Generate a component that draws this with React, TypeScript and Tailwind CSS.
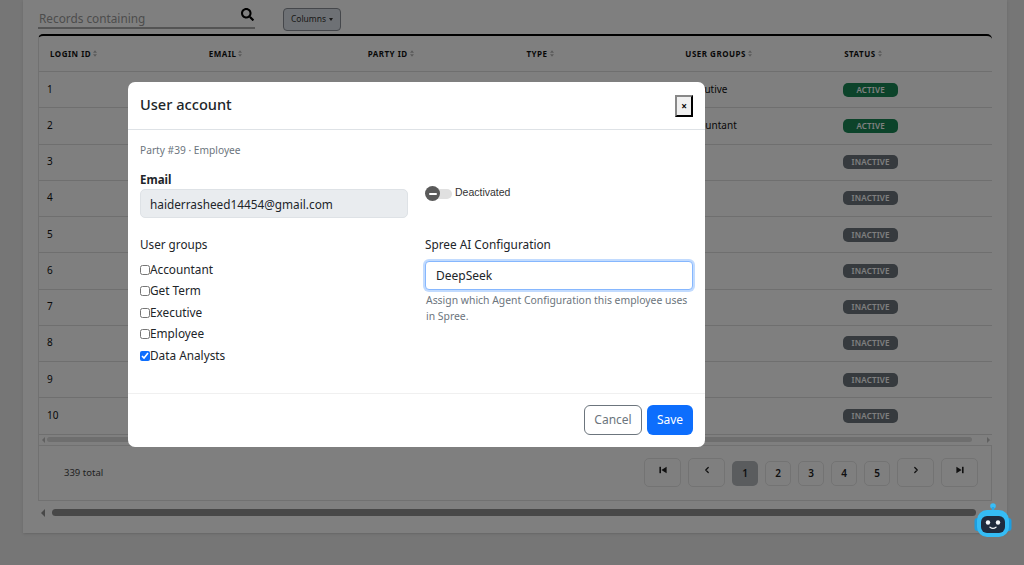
import React from "react";
import { FaSearch } from "react-icons/fa";
import { ChevronLeft, ChevronRight } from "lucide-react";

const headers = ["LOGIN ID", "EMAIL", "PARTY ID", "TYPE", "USER GROUPS", "STATUS"];
const groups = ["Accountant", "Get Term", "Executive", "Employee", "Data Analysts"];
const rows = [1, 2, 3, 4, 5, 6, 7, 8, 9, 10];

function SortIcon() {
  return (
    <svg viewBox="0 0 6 10" className="ml-[2px] h-[7px] w-[4px]" fill="#b5b5b5">
      <path d="M3 0 L6 4 H0 Z M3 10 L0 6 H6 Z" />
    </svg>
  );
}

function SkipIcon({ flip }: { flip?: boolean }) {
  return (
    <svg viewBox="0 0 10 10" className={flip ? "h-[8px] w-[8px] rotate-180" : "h-[8px] w-[8px]"} fill="#222">
      <rect x="0.5" y="1" width="2" height="8" />
      <path d="M9.5 1 V9 L3 5 Z" />
    </svg>
  );
}

function Robot() {
  return (
    <svg viewBox="0 0 38 35" className="h-[35px] w-[38px]">
      <circle cx="19" cy="3" r="2.8" fill="#38bdf8" />
      <rect x="17.8" y="4" width="2.4" height="4" fill="#2aa8e8" />
      <rect x="0.5" y="15" width="6" height="13" rx="3" fill="#1d9ee0" />
      <rect x="31.5" y="15" width="6" height="13" rx="3" fill="#1d9ee0" />
      <rect x="3" y="7" width="32" height="27" rx="10" fill="#35bcf5" />
      <rect x="7" y="13" width="24" height="17" rx="6" fill="#1f2b3e" />
      <circle cx="14" cy="19.5" r="2.2" fill="#f4f7fb" />
      <circle cx="24" cy="19.5" r="2.2" fill="#f4f7fb" />
      <path d="M16 24.2 Q19 26.6 22 24.2" stroke="#f4f7fb" strokeWidth="1.3" fill="none" strokeLinecap="round" />
    </svg>
  );
}

function PageButton({ children, active, wide }: { children: React.ReactNode; active?: boolean; wide?: boolean }) {
  const cls = wide
    ? "flex h-[29px] w-[37px] -translate-y-[1px] items-center justify-center rounded-[5px] border border-[#e6e6e6] bg-white pb-[4px] text-[#222]"
    : active
      ? "flex h-[25px] w-[26px] items-center justify-center rounded-[5px] bg-[#b4b8bd] text-[10px] font-semibold text-[#222]"
      : "flex h-[25px] w-[26px] items-center justify-center rounded-[5px] border border-[#e6e6e6] bg-white text-[10px] font-semibold text-[#222]";
  return <div className={cls}>{children}</div>;
}

export default function App() {
  return (
    <div className="relative h-[565px] w-[1024px] overflow-hidden bg-[#ececec] font-['Noto_Sans',sans-serif]">
      <div className="ml-[23px] h-[533px] w-[984px] bg-white px-[15px] pt-[8px] shadow-sm">
        <div className="flex h-[26px] items-start">
          <div className="flex h-[21px] w-[217px] items-start justify-between border-b-2 border-[#a8a8a8] pl-[1px] pr-[1px]">
            <span className="pt-[2px] text-[11.8px] leading-[17px] text-[#9a9a9a]">Records containing</span>
            <FaSearch className="text-[13px] text-black" />
          </div>
          <div className="ml-[28px] flex h-[23px] w-[58px] items-center justify-center gap-[3px] rounded-[4px] border border-[#8a8f96] bg-[#dde3ea] text-[8.5px] text-[#333]">
            Columns
            <span className="h-0 w-0 border-x-[2.5px] border-t-[3px] border-x-transparent border-t-[#333]" />
          </div>
        </div>

        <div className="w-[954px] rounded-t-[5px] border-t-2 border-black">
          <div className="border-l border-[#e2e2e2]">
            <div className="grid h-[36px] grid-cols-6 items-center border-b border-[#dedede] text-[8px] font-bold tracking-[0.5px] text-[#111]">
              {headers.map((h) => (
                <div key={h} className="flex items-center pl-[11px]">
                  {h}
                  <SortIcon />
                </div>
              ))}
            </div>
            {rows.map((r) => (
              <div key={r} className="grid h-[36.25px] grid-cols-6 items-center border-b border-[#dedede] text-[10px] text-[#111]">
                <div className="pb-[1px] pl-[8px]">{r}</div>
                <div />
                <div />
                <div />
                <div className="pb-[1px] pl-[9px]">{r === 1 ? "Executive" : r === 2 ? "Accountant" : ""}</div>
                <div className="pl-[10px]">
                  <span
                    className={
                      r < 3
                        ? "flex h-[14px] w-[55px] items-center justify-center rounded-[5px] bg-[#198754] text-[8px] font-semibold tracking-[0.2px] text-white"
                        : "flex h-[14px] w-[55px] items-center justify-center rounded-[5px] bg-[#6c757d] text-[8px] font-semibold tracking-[0.2px] text-white"
                    }
                  >
                    {r < 3 ? "ACTIVE" : "INACTIVE"}
                  </span>
                </div>
              </div>
            ))}
          </div>

          <div className="flex h-[10px] items-center gap-[2px] border-l border-[#e2e2e2] pl-[3px]">
            <span className="h-0 w-0 border-y-[3px] border-r-[3px] border-y-transparent border-r-[#c0c0c0]" />
            <div className="h-[5px] w-[925px] rounded-full bg-[#dcdcdc]" />
            <span className="ml-[13px] h-0 w-0 border-y-[3px] border-l-[3px] border-y-transparent border-l-[#c0c0c0]" />
          </div>

          <div className="flex h-[56px] items-center justify-between border border-[#e2e2e2] pl-[25px] pr-[13px] pt-[1px]">
            <span className="text-[9.5px] text-[#444]">339 total</span>
            <div className="flex items-center gap-[7px]">
              <PageButton wide><SkipIcon /></PageButton>
              <PageButton wide><ChevronLeft size={10} strokeWidth={3} /></PageButton>
              <PageButton active>1</PageButton>
              <PageButton>2</PageButton>
              <PageButton>3</PageButton>
              <PageButton>4</PageButton>
              <PageButton>5</PageButton>
              <PageButton wide><ChevronRight size={10} strokeWidth={3} /></PageButton>
              <PageButton wide><SkipIcon flip /></PageButton>
            </div>
          </div>
        </div>

        <div className="mt-[8px] flex h-[8px] items-center gap-[7px] pl-[3px]">
          <span className="h-0 w-0 border-y-[4px] border-r-[4px] border-y-transparent border-r-[#909090]" />
          <div className="h-[7px] w-[924px] rounded-full bg-[#909090]" />
        </div>
      </div>

      <div className="absolute inset-0 bg-black/50 pl-[128px] pt-[82px]">
        <div className="h-[365px] w-[577px] rounded-[7px] bg-white text-[#212529]">
          <div className="flex h-[48px] items-center justify-between border-b border-[#dee2e6] pl-[12px] pr-[12px]">
            <h2 className="pb-[1px] text-[14.6px] font-medium">User account</h2>
            <button className="flex h-[22px] w-[18px] items-center justify-center border-2 border-b-black border-l-[#888] border-r-black border-t-[#888] bg-[#f0f0f0] text-[10px] font-bold leading-none text-black">
              ×
            </button>
          </div>

          <div className="h-[264px] border-b border-[#f0f0f0] px-[12px] pt-[13px]">
            <p className="text-[10.2px] leading-[15px] text-[#6c757d]">Party #39 · Employee</p>
            <div className="mt-[14px] grid grid-cols-[268px_268px] gap-x-[17px]">
              <div>
                <label className="block text-[11.5px] font-bold leading-[15px]">Email</label>
                <input
                  readOnly
                  value="haiderrasheed14454@gmail.com"
                  className="mt-[2px] block h-[29px] w-[268px] rounded-[5px] border border-[#dee2e6] bg-[#e9ecef] pl-[9px] text-[11.8px] text-[#212529]"
                />
              </div>
              <div className="flex items-start pt-[14px]">
                <div className="relative flex h-[15px] w-[27px] items-center">
                  <div className="ml-[5px] h-[10px] w-[22px] rounded-full bg-[#e0e0e0]" />
                  <div className="absolute left-0 top-0 flex h-[15px] w-[15px] items-center justify-center rounded-full bg-[#5a5a5a]">
                    <div className="h-[2px] w-[8px] rounded bg-white" />
                  </div>
                </div>
                <span className="ml-[3px] font-['Liberation_Sans',sans-serif] text-[10.5px] leading-[13px] text-[#333]">Deactivated</span>
              </div>

              <div className="mt-[19px]">
                <p className="text-[11.7px] leading-[15px]">User groups</p>
                <div className="mt-[7px] flex flex-col">
                  {groups.map((g) => (
                    <label key={g} className="flex h-[21.5px] items-center text-[11.8px]">
                      <input type="checkbox" readOnly checked={g === "Data Analysts"} className="m-0 h-[10px] w-[10px] accent-[#0d6efd]" />
                      {g}
                    </label>
                  ))}
                </div>
              </div>
              <div className="mt-[19px]">
                <p className="text-[11.8px] leading-[15px]">Spree AI Configuration</p>
                <select className="mt-[9px] block h-[29px] w-[268px] appearance-none rounded-[4px] border border-[#86b7fe] bg-white pl-[10px] text-[12px] text-[#212529] shadow-[0_0_0_2px_#c2dbfe]">
                  <option>DeepSeek</option>
                </select>
                <p className="ml-[1px] mt-[2px] text-[10.4px] leading-[16px] text-[#6c757d]">
                  Assign which Agent Configuration this employee uses in Spree.
                </p>
              </div>
            </div>
          </div>

          <div className="flex justify-end gap-[5px] pr-[12px] pt-[11px]">
            <button className="h-[30px] w-[58px] rounded-[6px] border border-[#6c757d] bg-white text-[12px] text-[#6c757d]">Cancel</button>
            <button className="h-[30px] w-[46px] rounded-[6px] bg-[#0d6efd] text-[12px] text-white">Save</button>
          </div>
        </div>
      </div>

      <div className="absolute left-[974px] top-[503px]">
        <Robot />
      </div>
    </div>
  );
}
